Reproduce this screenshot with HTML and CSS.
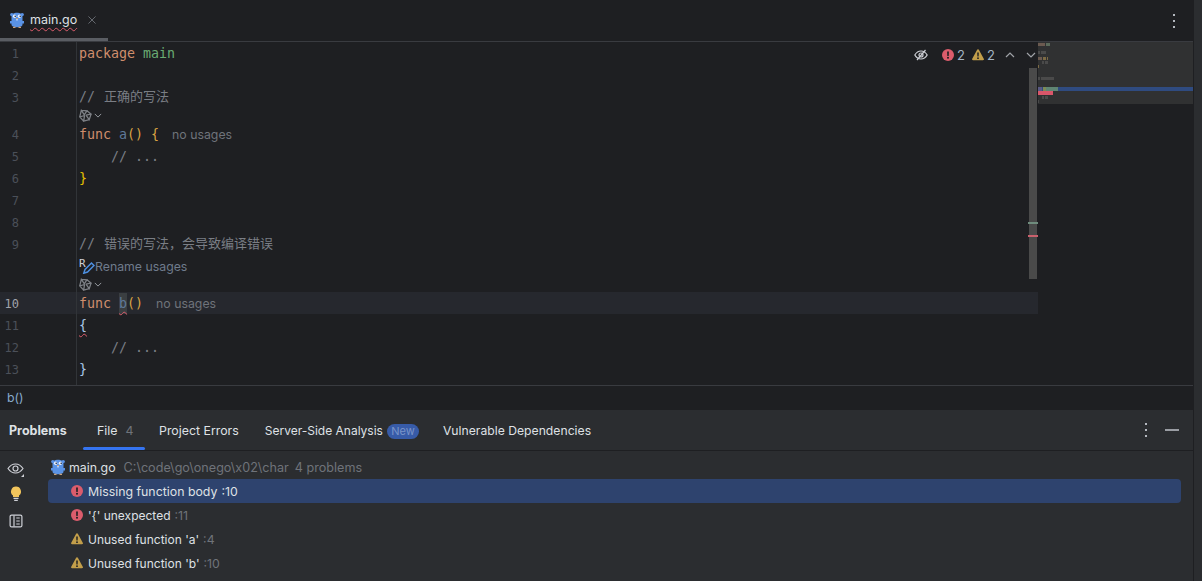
FILE: index.html
```html
<!DOCTYPE html>
<html lang="en">
<head>
<meta charset="utf-8">
<title>main.go</title>
<link rel="stylesheet" href="styles.css">
</head>
<body>
<svg class="defs" width="0" height="0" aria-hidden="true">
  <defs>
    <symbol id="gopher" viewBox="0 0 14 16">
      <circle cx="1.800" cy="2.600" r="1.700" fill="#5a93e6"/><circle cx="12.200" cy="2.600" r="1.700" fill="#5a93e6"/>
      <path d="M0 9h2v2.500H0zM12 9h2v2.500h-2z" fill="#5a93e6"/>
      <path d="M1.500 5C1.500 2 4 .8 7 .8s5.500 1.200 5.500 4.200v7.500c0 2-2.500 2.700-5.500 2.700s-5.500-.7-5.500-2.700z" fill="#5a93e6"/>
      <path d="M3 14.800h2.500v1.200H3zM8.500 14.800H11v1.200H8.500z" fill="#c9a27c"/>
      <circle cx="4.600" cy="4.200" r="1.700" fill="#eaf2ff"/><circle cx="9.400" cy="4.200" r="1.700" fill="#eaf2ff"/>
      <rect x="4.600" y="3.600" width="1.200" height="1.400" fill="#14213a"/><rect x="9.600" y="3.600" width="1.200" height="1.400" fill="#14213a"/>
      <path d="M6 6h2v1H6z" fill="#c9a27c"/><path d="M6.400 7h1.200v1.400H6.400z" fill="#eaf2ff"/>
    </symbol>
    <symbol id="err" viewBox="0 0 12 12">
      <circle cx="6" cy="6" r="6" fill="#db5c6c"/>
      <path d="M5.100 2.400h1.800l-.2 4.600H5.300z" fill="#1e1f22"/><circle cx="6" cy="8.800" r="1" fill="#1e1f22"/>
    </symbol>
    <symbol id="warn" viewBox="0 0 12 12">
      <path d="M6 .3c.5 0 .8.2 1 .6l4.900 9c.3.7-.1 1.400-.9 1.400H1c-.8 0-1.200-.7-.9-1.400l4.900-9c.2-.4.5-.6 1-.6z" fill="#c29e4a"/>
      <path d="M5.200 3.600h1.600l-.2 4H5.400z" fill="#1e1f22"/><circle cx="6" cy="9.200" r=".9" fill="#1e1f22"/>
    </symbol>
    <symbol id="ai" viewBox="0 0 14 14">
      <g fill="none" stroke="#7d8086" stroke-width="1.400">
        <path d="M2.500 1.500l6 .5-3 4.500M8.500 2l4.500 3.500-5.500 1M13 5.500l-2 6-3.500-5M11 11.500l-6 1.500 1-6M5 13L.8 8.500l5.200-1.500M.8 8.500L2.500 1.500 6 6.500"/>
      </g>
    </symbol>
    <symbol id="chev" viewBox="0 0 10 6">
      <path d="M1 1l4 4 4-4" fill="none" stroke="currentColor" stroke-width="1.200"/>
    </symbol>
  </defs>
</svg>

<div class="app">
  <main class="main">
    <header class="tabbar">
      <div class="tab">
        <svg class="i-gopher"><use href="#gopher"/></svg>
        <span class="tab-name">main.go</span>
        <svg class="tab-close" viewBox="0 0 9 9"><path d="M.5.5l8 8M8.500.5l-8 8" stroke="#6f737a" stroke-width="1"/></svg>
      </div>
      <svg class="dots" viewBox="0 0 2 14"><path d="M0 0h2v2H0zM0 6h2v2H0zM0 12h2v2H0z" fill="#b4b8bf"/></svg>
    </header>

    <section class="editor">
      <div class="code-area">
        <div class="line"><span class="num">1</span><code class="src"><b class="kw">package</b> <span class="pkg">main</span></code></div>
        <div class="line"><span class="num">2</span><code class="src"></code></div>
        <div class="line"><span class="num">3</span><code class="src cm cjk-line">// <span class="cjk">正确的写法</span></code></div>
        <div class="line inlay"><span class="num"></span><div class="src hint"><svg class="i-ai"><use href="#ai"/></svg><svg class="i-chev"><use href="#chev"/></svg></div></div>
        <div class="line"><span class="num">4</span><code class="src"><b class="kw">func</b> <span class="fn">a</span><span class="br">()</span> <span class="br">{</span><span class="usage usage-a">no usages</span></code></div>
        <div class="line"><span class="num">5</span><code class="src cm">    // ...</code></div>
        <div class="line"><span class="num">6</span><code class="src"><span class="br2">}</span></code></div>
        <div class="line"><span class="num">7</span><code class="src"></code></div>
        <div class="line"><span class="num">8</span><code class="src"></code></div>
        <div class="line"><span class="num">9</span><code class="src cm cjk-line">// <span class="cjk">错误的写法&#xFF0C;会导致编译错误</span></code></div>
        <div class="line rename"><span class="num"></span><div class="src hint"><svg class="i-rename" viewBox="0 0 16 16"><text x="0" y="8.500" class="r-letter">R</text><path d="M6 11.500l-1.200 3.700 3.700-1.200 6.500-6.500-2.500-2.500z" fill="none" stroke="#4d8fe0" stroke-width="1.500"/></svg><span class="usage">Rename usages</span></div></div>
        <div class="line inlay"><span class="num"></span><div class="src hint"><svg class="i-ai"><use href="#ai"/></svg><svg class="i-chev"><use href="#chev"/></svg></div></div>
        <div class="line current"><span class="num">10</span><code class="src"><b class="kw">func</b> <span class="fn hl wavy">b</span><span class="br">()</span><span class="usage usage-b">no usages</span></code></div>
        <div class="line"><span class="num">11</span><code class="src"><span class="br3 wavy">{</span></code></div>
        <div class="line"><span class="num">12</span><code class="src cm">    // ...</code></div>
        <div class="line"><span class="num">13</span><code class="src"><span class="br3">}</span></code></div>
        <div class="line filler"><span class="num"></span></div>

        <div class="widget">
          <svg class="i-eye" viewBox="0 0 14 12"><path d="M.8 6C2.500 3.200 4.500 2 7 2s4.500 1.200 6.200 4c-1.700 2.800-3.700 4-6.200 4S2.500 8.800.8 6z" fill="none" stroke="#ced0d6" stroke-width="1.200"/><circle cx="7" cy="6" r="2" fill="none" stroke="#ced0d6" stroke-width="1.200"/><path d="M11.500 1L3 11" stroke="#ced0d6" stroke-width="1.200"/></svg>
          <svg class="i-12 w-err"><use href="#err"/></svg><span class="count">2</span>
          <svg class="i-12 w-warn"><use href="#warn"/></svg><span class="count">2</span>
          <svg class="w-chev w-up"><use href="#chev"/></svg>
          <svg class="w-chev"><use href="#chev"/></svg>
        </div>
        <div class="scrollbar"><span class="mark-green"></span><span class="mark-red"></span></div>
      </div>
      <svg class="minimap" viewBox="0 0 155 62" aria-hidden="true">
        <rect width="155" height="62" fill="#303132"/>
        <rect x="0" y="45" width="155" height="4" fill="#2f4b80"/>
        <g fill="#6b5a50"><rect y="1" width="7" height="3"/><rect y="15" width="4" height="3"/></g>
        <g fill="#5b6a5b"><rect x="8" y="1" width="4" height="3"/></g>
        <g fill="#4a4a4a"><rect y="9" width="2" height="3"/><rect x="3" y="9" width="5" height="3"/><rect x="4" y="19" width="2" height="3"/><rect x="7" y="19" width="3" height="3"/><rect y="35" width="2" height="3"/><rect x="3" y="35" width="13" height="3"/><rect x="4" y="54" width="2" height="3"/><rect x="7" y="54" width="3" height="3"/><rect y="58" width="1" height="3"/></g>
        <g fill="#7b6a45"><rect x="5" y="15" width="3" height="3"/><rect x="9" y="15" width="1" height="3"/><rect y="23" width="1" height="3"/></g>
        <rect y="45" width="4" height="4" fill="#5a5a85"/><rect x="5" y="45" width="3" height="4" fill="#7d8a55"/><rect x="8" y="45" width="12" height="4" fill="#5f8573"/>
        <rect y="49" width="15" height="4" fill="#d9566a"/>
      </svg>
    </section>

    <nav class="crumb">b()</nav>

    <section class="panel">
      <header class="panel-tabs">
        <strong class="panel-title">Problems</strong>
        <span class="ptab active">File<em class="ptab-count">4</em></span>
        <span class="ptab ptab-errors">Project Errors</span>
        <span class="ptab ptab-server">Server-Side Analysis<i class="badge">New</i></span>
        <span class="ptab ptab-vuln">Vulnerable Dependencies</span>
        <span class="spacer"></span>
        <svg class="dots dots-panel" viewBox="0 0 2 14"><path d="M0 0h2v2H0zM0 6h2v2H0zM0 12h2v2H0z" fill="#b4b8bf"/></svg>
        <span class="minimize"></span>
      </header>
      <div class="panel-body">
        <aside class="side">
          <svg class="i-side" viewBox="0 0 18 16"><path d="M1 7.500C3 4.500 5.500 3 8.500 3s5.500 1.500 7.500 4.500c-2 3-4.500 4.500-7.500 4.500S3 10.500 1 7.500z" fill="none" stroke="#ced0d6" stroke-width="1.200"/><circle cx="8.500" cy="7.500" r="2.500" fill="none" stroke="#ced0d6" stroke-width="1.200"/><path d="M17 13v3h-3z" fill="#ced0d6"/></svg>
          <svg class="i-side" viewBox="0 0 18 16"><path d="M9 .5a5 5 0 0 1 3 9v1.500H6V9.500a5 5 0 0 1 3-9z" fill="#f2c55c"/><path d="M6.500 12.300h5M7.200 14.300h3.600" stroke="#ced0d6" stroke-width="1.200"/></svg>
          <svg class="i-side i-book" viewBox="0 0 18 16"><rect x="3.100" y="2.100" width="11.800" height="11.800" rx="1.500" fill="none" stroke="#ced0d6" stroke-width="1.200"/><path d="M7 2.500v11M9.300 5h3.400M9.300 8h3.400M9.300 11h3.400" stroke="#ced0d6" stroke-width="1.200"/></svg>
        </aside>
        <div class="tree">
          <div class="row row-file"><svg class="i-gopher"><use href="#gopher"/></svg><span class="file">main.go</span><span class="path">C:\code\go\onego\x02\char</span><span class="path probs">4 problems</span></div>
          <div class="row row-item selected"><svg class="i-12"><use href="#err"/></svg><span class="msg">Missing function body</span><span class="loc">:10</span></div>
          <div class="row row-item"><svg class="i-12"><use href="#err"/></svg><span class="msg">'{' unexpected</span><span class="loc">:11</span></div>
          <div class="row row-item"><svg class="i-12"><use href="#warn"/></svg><span class="msg">Unused function 'a'</span><span class="loc">:4</span></div>
          <div class="row row-item"><svg class="i-12"><use href="#warn"/></svg><span class="msg">Unused function 'b'</span><span class="loc">:10</span></div>
        </div>
      </div>
    </section>
  </main>
  <div class="stripe"></div>
</div>
</body>
</html>
```

FILE: styles.css
```css
* { box-sizing: border-box; }
html, body { margin: 0; height: 100%; overflow: hidden; background: #1e1f22; }
body { font: 12.35px/1 Inter, "Noto Sans CJK SC", sans-serif; color: #ced0d6; }
.defs { position: absolute; }

.app { display: flex; width: 1202px; height: 581px; }
.main { display: flex; flex-direction: column; width: 1193px; }
.stripe { width: 9px; background: #2b2d30; border-left: 1px solid #1e1f22; }

/* Tabs */
.tabbar { display: flex; align-items: center; justify-content: space-between; height: 42px; padding-right: 18px; border-bottom: 1px solid #393b40; }
.tab { position: relative; display: flex; align-items: center; width: 108px; height: 41px; padding: 0 0 0 10px; }
.tab::after { content: ""; position: absolute; left: 0; right: 0; bottom: 0; height: 3px; background: #5a5d63; }
.tab .i-gopher { margin-top: -1px; }
.i-gopher { width: 14px; height: 16px; flex: none; }
.tab-name { margin-left: 6px; color: #dfe1e5; font-size: 12.5px; text-decoration: underline wavy #db5c6c 1px; text-underline-offset: 3px; }
.tab-close { width: 8px; height: 8px; margin-left: 11px; margin-top: -2px; }
.dots { width: 2px; height: 14px; }

/* Editor */
.editor { position: relative; display: flex; height: 343px; }
.code-area { position: relative; display: flex; flex-direction: column; width: 1038px; height: 343px; overflow: hidden; }
.line { display: flex; flex: none; height: 22px; }
.line.inlay { height: 15px; }
.line.filler { flex: 1; }
.line.current { background: #26282e; }
.num { flex: none; width: 77px; padding: 1px 57px 0 0; border-right: 1px solid #313438; font: 12px/22px "DejaVu Sans Mono", monospace; text-align: right; color: #4b5059; }
.current .num { color: #a1a3ab; }
.src { display: block; padding: 1px 0 0 2px; font: 13.3px/21px "DejaVu Sans Mono", "Noto Sans CJK SC", monospace; white-space: pre; color: #bcbec4; }
.src.hint { padding-top: 0; }
.src.cjk-line { padding-top: 0; line-height: 22px; }
.src b { font-weight: 400; }
.kw { color: #cf8e6d; }
.pkg { color: #6aab73; }
.cm { color: #7a7e85; }
.cjk { margin-left: 1px; font: 13px/1 "Noto Sans CJK SC", sans-serif; }
.fn { color: #5f7a99; }
.br { color: #d9a343; }
.br2 { color: #e5c100; }
.br3 { color: #a9c8e8; }
.hl { background: #3a3e41; display: inline-block; height: 21px; }
.wavy { text-decoration: underline wavy #db5c6c 1px; text-underline-offset: 3px; }
.usage { font: 12.3px/1 Inter, sans-serif; color: #6f737a; }
.usage-a { margin-left: 13px; }
.usage-b { margin-left: 13px; }
.hint { display: flex; align-items: center; }
.i-ai { width: 13px; height: 13px; }
.i-chev { width: 8px; height: 5px; margin-left: 2px; color: #9a9da3; }
.i-rename { width: 16px; height: 16px; flex: none; }
.r-letter { font: 11px "DejaVu Sans Mono", monospace; fill: #ced0d6; }
.rename .usage { padding-top: 3px; color: #6f7b8c; }

/* Inspection widget */
.widget { position: absolute; top: 6px; left: 914px; display: flex; align-items: center; height: 14px; }
.i-eye { width: 14px; height: 12px; flex: none; }
.i-12 { width: 12px; height: 12px; flex: none; }
.w-err { margin-left: 14px; }
.w-warn { margin-left: 7px; }
.count { width: 8px; margin-left: 3px; color: #a4b4c4; font-size: 13px; }
.w-chev { width: 10px; height: 6px; margin-left: 11px; color: #a0a3a8; flex: none; }
.w-up { margin-left: 10px; transform: rotate(180deg); }
.scrollbar { position: absolute; top: 26px; left: 1029px; width: 8px; height: 211px; background: #4a4a4a; }
.mark-green, .mark-red { position: absolute; left: -1px; width: 10px; height: 2px; }
.mark-green { top: 154px; background: #6f8c7d; }
.mark-red { top: 167px; background: #c9606c; }
.minimap { width: 155px; height: 62px; flex: none; }

/* Breadcrumb */
.crumb { height: 25px; padding-left: 7px; border-top: 1px solid #393b40; font: 12.35px/24px Inter, sans-serif; color: #86a9cc; }

/* Problems panel */
.panel { flex: 1; display: flex; flex-direction: column; background: #2b2d30; }
.panel-tabs { display: flex; align-items: center; height: 41px; padding-left: 9px; border-bottom: 1px solid #1e1f22; }
.panel-title { width: 75px; padding-top: 2px; font-size: 12.5px; font-weight: 700; color: #dfe1e5; }
.ptab { position: relative; display: flex; align-items: center; height: 40px; margin: 0 13px; padding-top: 2px; color: #dfe1e5; }
.ptab.active { width: 36px; }
.ptab.active::after { content: ""; position: absolute; left: -14px; right: -12px; bottom: 0; height: 3px; border-radius: 2px; background: #3574f0; }
.ptab-server { margin-right: 11px; font-size: 12px; }
.ptab-vuln { font-size: 12.2px; }
.ptab-count { margin-left: 8px; font-style: normal; color: #6f737a; }
.badge { display: inline-block; width: 32px; margin-left: 4px; height: 15px; border-radius: 8px; background: #375ba8; font: 11px/15px Inter, sans-serif; text-align: center; color: #7a94c9; }
.spacer { flex: 1; }
.dots-panel { margin-right: 18px; }
.minimize { width: 14px; height: 2px; margin-right: 14px; background: #9a9da3; }
.panel-body { flex: 1; display: flex; }
.side { display: flex; flex-direction: column; align-items: center; gap: 9px; width: 48px; padding: 10px 16px 0 0; }
.i-side { width: 18px; height: 16px; flex: none; }
.i-book { margin-top: 2px; }
.tree { width: 1133px; padding-top: 4px; }
.row { display: flex; align-items: center; height: 24px; }
.row-file { padding-left: 3px; }
.file { margin-left: 4px; padding-top: 2px; color: #dfe1e5; }
.path { margin-left: 8px; padding-top: 2px; color: #6f737a; font-size: 12.6px; }
.probs { margin-left: 6px; }
.row-item { padding-left: 23px; border-radius: 4px; }
.msg { margin-left: 5px; padding-top: 2px; font-size: 12px; color: #dfe1e5; }
.loc { margin-left: 4px; padding-top: 2px; color: #6f737a; }
.selected { background: #2e436e; }
.selected .msg { font-size: 12.35px; }
.selected .loc { color: #dfe1e5; }
```
